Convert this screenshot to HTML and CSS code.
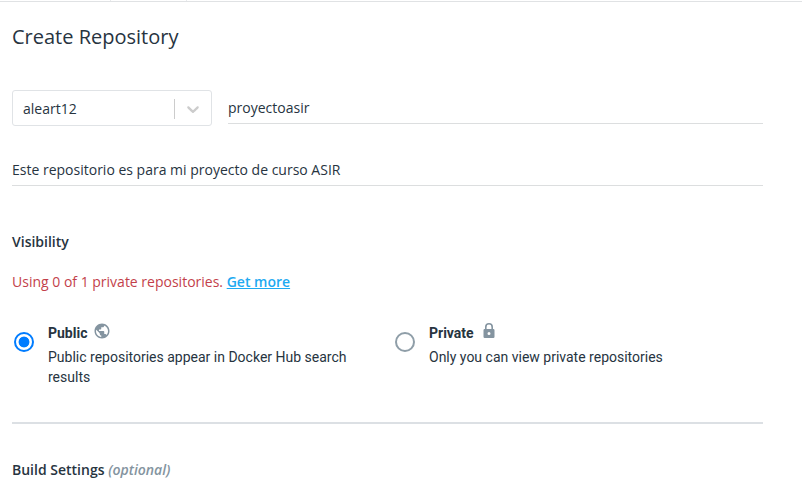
FILE: index.html
```html
<!DOCTYPE html>
<html lang="en">
<head>
<meta charset="utf-8">
<title>Create Repository</title>
<link rel="stylesheet" href="styles.css">
</head>
<body>
<div class="tabs"><span class="tab first"></span><span class="tab"></span></div>
<main class="page">
  <h1 class="title">Create Repository</h1>
  <div class="name-row">
    <div class="select"><span class="select-value">aleart12</span><span class="divider"></span>
      <svg class="chevron" width="20" height="20" viewBox="0 0 20 20"><path d="M4.516 7.548c0.436-0.446 1.043-0.481 1.576 0l3.908 3.747 3.908-3.747c0.533-0.481 1.141-0.446 1.574 0 0.436 0.445 0.408 1.197 0 1.615-0.406 0.418-4.695 4.502-4.695 4.502-0.217 0.223-0.502 0.335-0.787 0.335s-0.57-0.112-0.789-0.335c0 0-4.287-4.084-4.695-4.502s-0.436-1.17 0-1.615z"/></svg>
    </div>
    <div class="field name">proyectoasir</div>
  </div>
  <div class="field description">Este repositorio es para mi proyecto de curso ASIR</div>
  <h2 class="heading">Visibility</h2>
  <p class="usage">Using 0 of 1 private repositories. <a class="more">Get more</a></p>
  <div class="options">
    <div class="option">
      <span class="radio checked"></span>
      <div class="option-text">
        <div class="option-title">Public <svg class="icon" width="18" height="18" viewBox="0 0 24 24"><path d="M12 2C6.48 2 2 6.48 2 12s4.48 10 10 10 10-4.48 10-10S17.52 2 12 2zm-1 17.93c-3.95-.49-7-3.85-7-7.93 0-.62.08-1.21.21-1.79L9 15v1c0 1.1.9 2 2 2v1.93zm6.9-2.54c-.26-.81-1-1.39-1.9-1.39h-1v-3c0-.55-.45-1-1-1H8v-2h2c.55 0 1-.45 1-1V7h2c1.1 0 2-.9 2-2v-.41c2.93 1.19 5 4.06 5 7.41 0 2.08-.8 3.97-2.1 5.39z"/></svg></div>
        <div class="option-copy">Public repositories appear in Docker Hub search results</div>
      </div>
    </div>
    <div class="option">
      <span class="radio"></span>
      <div class="option-text">
        <div class="option-title">Private <svg class="icon lock" width="16" height="18" viewBox="0 0 16 18"><path fill-rule="evenodd" d="M4 7V5a4 4 0 0 1 8 0v2h.3a1.200 1.200 0 0 1 1.200 1.200v6.600a1.200 1.200 0 0 1-1.200 1.200H3.700a1.200 1.200 0 0 1-1.200-1.200V8.200A1.200 1.200 0 0 1 3.700 7zM5.600 7h4.800V5a2.400 2.400 0 0 0-4.800 0zM8 10a1.500 1.500 0 1 0 0 3 1.500 1.500 0 0 0 0-3z"/></svg></div>
        <div class="option-copy">Only you can view private repositories</div>
      </div>
    </div>
  </div>
  <h2 class="heading build">Build Settings <em class="optional">(optional)</em></h2>
</main>
</body>
</html>
```
FILE: styles.css
```css
* { box-sizing: border-box; }
body { margin: 0; background: #fff; color: #27343f; font: 14px/20px "Open Sans", sans-serif; }
.tabs { display: flex; height: 2px; border-bottom: 1px solid #e0e2e4; }
.tab { width: 76px; height: 1px; border-right: 1px solid #e8eaec; }
.first { width: 111px; }
.page { height: 478px; overflow: hidden; padding: 19px 39px 0 12px; }
.title { margin: 0; font-size: 20px; font-weight: 400; line-height: 32px; }
.name-row { display: flex; gap: 16px; margin-top: 37px; }
.select { width: 200px; height: 36px; border: 1px solid #e0e3e6; border-radius: 3px; display: flex; align-items: center; padding: 2px 8px 0 10px; }
.select-value { flex: 1; }
.divider { width: 1px; height: 20px; background: #ccc; margin-right: 8px; }
.chevron { fill: #ccc; }
.field { border-bottom: 1px solid #dcdedf; }
.name { flex: 1; height: 34px; padding-top: 8px; }
.description { height: 34px; margin-top: 26px; padding-top: 8px; }
.heading { margin: 46px 0 0; font-size: 14px; font-weight: 600; line-height: 20px; }
.usage { margin: 20px 0 0; color: #c33f4b; }
.more { color: #1eaaf1; font-weight: 600; text-decoration: underline; }
.options { display: flex; height: 102px; margin-top: 30px; border-bottom: 2px solid #dce0e4; font-family: Roboto, sans-serif; }
.option { flex: none; display: flex; width: 381px; padding-right: 28px; }
.option:last-child { width: 370px; }
.radio { flex: none; width: 20px; height: 20px; border: 2px solid #8f9ea8; border-radius: 50%; margin: 10px 14px 0 2px; }
.checked { border-color: #007cff; background: radial-gradient(circle, #007cff 5px, transparent 5.8px); }
.option-title { display: flex; align-items: center; height: 22px; margin-bottom: 3px; font-weight: 700; }
.icon { fill: #8494a0; margin: -4px 0 0 6px; }
.lock { margin-left: 7px; }
.build { margin-top: 36px; }
.optional { color: #8494a0; }
```
